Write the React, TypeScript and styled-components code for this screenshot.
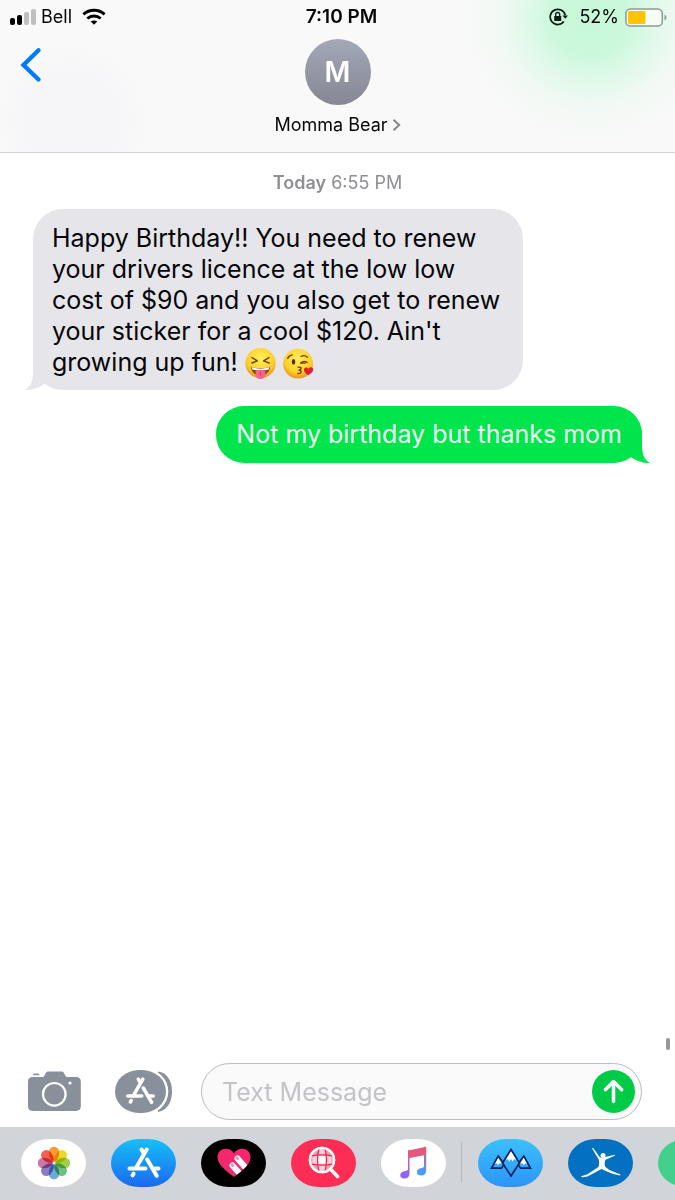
import React from "react";
import styled, { createGlobalStyle } from "styled-components";

const GlobalStyle = createGlobalStyle`
  *, *::before, *::after { box-sizing: border-box; }
  body {
    margin: 0;
    background: #fff;
    color: #060608;
    font-family: Inter, "Liberation Sans", sans-serif;
  }
  button, input { font: inherit; }
`;

const Screen = styled.div`
  display: flex;
  flex-direction: column;
  min-height: 100vh;
  overflow: hidden;
`;

const Header = styled.header`
  display: flex;
  flex-direction: column;
  border-bottom: 1px solid #d3d3d6;
  background:
    radial-gradient(ellipse 130px 125px at calc(100% - 84px) 18px, #c6f8d8 0%, rgba(200, 248, 218, 0.92) 30%, rgba(208, 249, 223, 0.6) 50%, rgba(225, 249, 233, 0.3) 72%, rgba(249, 249, 249, 0) 100%),
    radial-gradient(circle 76px at 72px 120px, #f6f6f9 0%, #f6f6f9 60%, rgba(249, 249, 249, 0) 100%),
    #f9f9f9;
`;

const StatusBar = styled.div`
  display: grid;
  grid-template-columns: 1fr auto 1fr;
  align-items: center;
  height: 34px;
  padding: 0 8px 0 10px;
  font-size: 18px;
  line-height: 24px;
`;

const StatusGroup = styled.div<{ $end?: boolean }>`
  display: flex;
  align-items: center;
  justify-content: ${(p) => (p.$end ? "flex-end" : "flex-start")};
  gap: ${(p) => (p.$end ? "6px" : "10px")};
`;

const Carrier = styled.span`
  display: flex;
  align-items: center;
  gap: 5px;
`;

const Charge = styled.span`
  margin-left: 4px;
`;

const Clock = styled.time`
  padding-left: 6px;
  font-size: 19px;
  font-weight: 600;
`;

const NavBar = styled.nav`
  display: grid;
  grid-template-columns: 1fr auto 1fr;
  align-items: start;
  height: 118px;
  padding: 5px 20px 0;
`;

const IconButton = styled.button`
  display: flex;
  flex: none;
  justify-self: start;
  padding: 0;
  border: 0;
  background: none;
  cursor: pointer;
`;

const BackButton = styled(IconButton)`
  padding-top: 8px;
`;

const Contact = styled.button`
  display: flex;
  flex-direction: column;
  align-items: center;
  gap: 8px;
  padding: 0;
  border: 0;
  background: none;
  color: inherit;
  font-size: 18px;
  line-height: 24px;
  cursor: pointer;
`;

const Avatar = styled.span`
  display: grid;
  place-items: center;
  width: 66px;
  height: 66px;
  border-radius: 50%;
  background: linear-gradient(#a3a8b8, #858892);
  color: #fff;
  font-size: 28px;
  font-weight: 600;
`;

const ContactName = styled.span`
  display: flex;
  align-items: center;
  gap: 4px;
`;

const Thread = styled.main`
  position: relative;
  display: flex;
  flex: 1;
  flex-direction: column;
  padding: 18px 33px 0;
`;

const Timestamp = styled.p`
  margin: 0 0 14px;
  color: #8e8e93;
  font-size: 18px;
  line-height: 24px;
  text-align: center;
`;

const Day = styled.strong`
  font-weight: 600;
`;

const Bubble = styled.p<{ $sent?: boolean }>`
  position: relative;
  align-self: ${(p) => (p.$sent ? "flex-end" : "flex-start")};
  max-width: 490px;
  margin: 0 0 16px;
  padding: ${(p) => (p.$sent ? "13px 20px" : "14px 19px 12px")};
  border-radius: ${(p) => (p.$sent ? "28px" : "30px")};
  background: ${(p) => (p.$sent ? "#00e54b" : "#e5e5ea")};
  color: ${(p) => (p.$sent ? "#f0fff4" : "#060608")};
  font-size: 25px;
  line-height: 31px;
`;

const Tail = styled.svg<{ $sent?: boolean }>`
  position: absolute;
  bottom: 0;
  ${(p) => (p.$sent ? "right: -9px; transform: scaleX(-1);" : "left: -9px;")}
  fill: ${(p) => (p.$sent ? "#00e54b" : "#e5e5ea")};
`;

const EmojiSvg = styled.svg`
  width: 31px;
  height: 31px;
  margin: -4px 7px -4px 0;
  vertical-align: -4px;
`;

const ScrollThumb = styled.div`
  position: absolute;
  right: 5px;
  bottom: 13px;
  width: 4px;
  height: 12px;
  border-radius: 2px;
  background: #98989c;
`;

const Composer = styled.form`
  display: flex;
  align-items: center;
  padding: 0 33px 7px 28px;
`;

const Tools = styled.div`
  display: flex;
  align-items: center;
  gap: 34px;
  margin-right: 29px;
`;

const Field = styled.div`
  display: flex;
  flex: 1;
  align-items: center;
  min-width: 0;
  height: 57px;
  padding: 0 6px 0 20px;
  border: 1px solid #bcbcc1;
  border-radius: 29px;
  background: #fafafa;
`;

const MessageInput = styled.input`
  flex: 1;
  min-width: 0;
  padding: 2px 0 0;
  border: 0;
  outline: 0;
  background: none;
  font-size: 25px;
  line-height: 31px;
  &::placeholder { color: #c3c3c8; opacity: 1; }
`;

const AppStrip = styled.div`
  display: flex;
  align-items: center;
  gap: 25px;
  height: 73px;
  padding: 0 0 2px 21px;
  overflow: hidden;
  background: #d1d4d9;
`;

const AppPill = styled.button<{ $fill: string }>`
  display: grid;
  flex: none;
  place-items: center;
  width: 65px;
  height: 48px;
  padding: 0;
  border: 0;
  border-radius: 28px / 24px;
  background: ${(p) => p.$fill};
  cursor: pointer;
`;

const Divider = styled.div`
  flex: none;
  width: 1px;
  height: 41px;
  margin: 0 -9px 0 -10px;
  background: #b4b7bc;
`;

const SignalIcon = () => (
  <svg width="26" height="18" viewBox="0 0 26 18" aria-label="Signal strength">
    <rect x="0" y="10" width="5" height="7" rx="2" fill="#000" />
    <rect x="7" y="7" width="5" height="10" rx="2" fill="#000" />
    <rect x="14" y="4" width="5" height="13" rx="2" fill="#bfbfc1" />
    <rect x="21" y="1" width="5" height="16" rx="2" fill="#bfbfc1" />
  </svg>
);

const WifiIcon = () => (
  <svg width="24" height="18" viewBox="0 0 24 18" fill="none" stroke="#000" strokeWidth="2.900" aria-label="Wi-Fi">
    <path d="M1.400 6.300C7.400.9 16.600.9 22.600 6.300" />
    <path d="M5.300 10.500C9.200 7.100 14.800 7.100 18.700 10.500" />
    <path d="M12 16.800 8.700 13.600C10.400 12.100 13.600 12.100 15.300 13.600Z" fill="#000" stroke="none" />
  </svg>
);

const RotationLockIcon = () => (
  <svg width="20" height="18" viewBox="0 0 20 18" fill="none" stroke="#0b1c12" aria-label="Rotation lock">
    <path d="M16.200 7.200A7.600 7.600 0 1 0 14.800 13.600" strokeWidth="1.700" />
    <path d="M13.400 7.500h5.600L16.300 10.800Z" fill="#0b1c12" stroke="none" />
    <rect x="5.200" y="8" width="7" height="5" rx=".6" fill="#0b1c12" stroke="none" />
    <path d="M6.700 8.400V6.500a2 2 0 0 1 4 0v1.900" strokeWidth="1.300" />
  </svg>
);

const BatteryIcon = () => (
  <svg width="42" height="19" viewBox="0 0 42 19" aria-label="Battery">
    <rect x=".9" y=".9" width="36.400" height="17.200" rx="4.600" fill="#f5fdf7" stroke="#8c9a92" strokeWidth="1.500" />
    <rect x="3" y="3" width="17.500" height="13" rx="1.600" fill="#fec400" />
    <path d="M39.500 6.500q2 .8 2 3t-2 3Z" fill="#8c9a92" />
  </svg>
);

const BackIcon = () => (
  <svg width="22" height="36" viewBox="0 0 22 36" fill="none" stroke="#007aff" strokeWidth="4.300" strokeLinecap="round" strokeLinejoin="miter">
    <path d="M18.500 3.200 3.500 18l15 14.500" />
  </svg>
);

const ChevronIcon = () => (
  <svg width="9" height="14" viewBox="0 0 9 14" fill="none" stroke="#85858b" strokeWidth="2">
    <path d="m1.500 1.800 5.700 5.200-5.700 5.200" />
  </svg>
);

const BubbleTail = ({ sent }: { sent?: boolean }) => (
  <Tail $sent={sent} width="24" height="32" viewBox="0 0 24 32" aria-hidden>
    <path d="M9 0V13C9 22 7.500 28.500 1 32c7 .3 13-1.800 18.500-5.500L24 20V0Z" />
  </Tail>
);

const TongueFace = () => (
  <EmojiSvg viewBox="0 0 30 30" role="img" aria-label="Squinting face with tongue">
    <defs>
      <radialGradient id="faceA" cx=".5" cy=".35" r=".68">
        <stop offset="0" stopColor="#fff05a" />
        <stop offset=".65" stopColor="#fdd02c" />
        <stop offset="1" stopColor="#e98a16" />
      </radialGradient>
    </defs>
    <circle cx="15" cy="14.700" r="14.600" fill="url(#faceA)" />
    <path d="m6.800 9.300 5.200 3.200-5.300 2M23.200 9.300l-5.200 3.200 5.300 2" fill="none" stroke="#6e3f0c" strokeWidth="1.400" strokeLinecap="round" strokeLinejoin="round" />
    <path d="M5.500 17.800q9.500 3.800 19 0c-.7 5.600-4.600 8.800-9.500 8.800s-8.800-3.200-9.500-8.800Z" fill="#8a4a10" />
    <path d="M6.300 18.500q8.700 3 17.400 0l-.8 2.200q-7.900 2-15.800 0Z" fill="#fff" />
    <path d="M10.300 22.200q4.700-2 9.400 0v3.400a4.700 4.400 0 0 1-9.400 0Z" fill="#fb5f8e" />
    <path d="M15 22.500v4" stroke="#d93b6c" strokeWidth="1" />
  </EmojiSvg>
);

const KissFace = () => (
  <EmojiSvg viewBox="0 0 30 30" role="img" aria-label="Face blowing a kiss">
    <defs>
      <radialGradient id="faceB" cx=".5" cy=".35" r=".68">
        <stop offset="0" stopColor="#fff05a" />
        <stop offset=".65" stopColor="#fdd02c" />
        <stop offset="1" stopColor="#e98a16" />
      </radialGradient>
    </defs>
    <circle cx="14.600" cy="15.200" r="14.400" fill="url(#faceB)" />
    <g fill="none" stroke="#6b3b0a" strokeWidth="1.300" strokeLinecap="round" strokeLinejoin="round">
      <path d="M4.500 10q1.500-3 4.500-3.400M17.500 8.200q3.500-1.900 6 .8" />
      <path d="M17 14.500q3-2.800 6.500-.5M17.500 14.700h4" />
      <path d="M14.500 18.500q3.500-.2 3 1.500-.3 1.100-2 1.300 2.300.3 2 2-.4 1.500-3 1.400" />
    </g>
    <ellipse cx="10.200" cy="13.400" rx="1.700" ry="2.700" fill="#55300b" />
    <path d="M24.500 26.400c-4-2.500-4.900-4.900-3.700-6.700 1-1.400 3-1 3.700.6.8-1.700 3-2.300 4.200-.9 1.500 2-.6 4.800-4.200 7Z" fill="#e3202e" />
  </EmojiSvg>
);

const CameraIcon = () => (
  <svg width="53" height="41" viewBox="0 0 53 41" fill="#87909b">
    <path d="M5 4.200C5 2.600 6 2.400 7 2.400h2.800c1.200 0 1.700.8 1.700 1.800Z" />
    <path d="M4.500 6.100h9.300c1.600 0 2.300-.5 3-2l.7-1.700C18.200 1 19 .6 20.600.6h12.600c1.600 0 2.400.4 3 1.800l.8 1.700c.7 1.500 1.400 2 3 2h8.200c3 0 4.600 1.600 4.600 4.600v24.600c0 3-1.600 4.600-4.600 4.600H4.500C1.600 39.900 0 38.300 0 35.300V10.700C0 7.700 1.600 6.100 4.500 6.100Z" />
    <circle cx="26.300" cy="23.300" r="11.300" fill="none" stroke="#fff" strokeWidth="2.200" />
    <circle cx="42" cy="12" r="1.600" fill="#fff" />
  </svg>
);

const StoreGlyph = () => (
  <g fill="none" stroke="#fff" strokeWidth="4" strokeLinecap="round">
    <path d="M19.700 2.500 9.400 20.300M14.500 2.500l2.300 4M20.200 12.500l9.500 16.300" />
    <path d="M2.500 21.500h16M27.500 21.500h4M6.500 26.700l-1 1.700" />
  </g>
);

const AppStoreIcon = () => (
  <svg width="34" height="31" viewBox="0 0 34 31">
    <StoreGlyph />
  </svg>
);

const AppsDrawerIcon = () => (
  <svg width="57" height="43" viewBox="0 0 57 43">
    <path d="M43 1.500C52 2.500 57 11 57 21.500S52 40.500 43 42Z" fill="#87909b" />
    <rect x="-1.700" y="-1.700" width="55" height="46.400" rx="25" ry="23.200" fill="#fff" />
    <rect x="0" y="0" width="51" height="43" rx="24" ry="21.500" fill="#87909b" />
    <g transform="translate(10.500 7) scale(.88)">
      <StoreGlyph />
    </g>
  </svg>
);

const SendIcon = () => (
  <svg width="43" height="43" viewBox="0 0 43 43" fill="none">
    <circle cx="21.500" cy="21.500" r="21.500" fill="#00cb46" />
    <path d="M21.500 31.500v-20M13.300 19.700l8.200-8.200 8.200 8.200" stroke="#fff" strokeWidth="3.500" strokeLinecap="round" strokeLinejoin="round" />
  </svg>
);

const petals = ["#f98f1e", "#e8d60f", "#96c93a", "#5fb96f", "#5f9fd6", "#8170b8", "#c5699f", "#ee4f40"];

const PetalBlend = styled.path`
  mix-blend-mode: multiply;
`;

const PhotosIcon = () => (
  <svg width="36" height="36" viewBox="-18 -18 36 36">
    {petals.map((color, i) => (
      <PetalBlend
        key={color}
        d="M0-1C-3.500-2.500-5.200-6-5.200-11a5.200 5.200 0 0 1 10.400 0C5.200-6 3.500-2.500 0-1Z"
        fill={color}
        fillOpacity=".9"
        transform={`rotate(${i * 45})`}
      />
    ))}
  </svg>
);

const HeartIcon = () => (
  <svg width="34" height="30" viewBox="0 0 34 30">
    <defs>
      <clipPath id="heart">
        <path d="M17 29C11 24 .5 17.500.5 9.300.5 4 4.300.8 8.800.8c3.600 0 6.700 1.900 8.200 4.700C18.500 2.700 21.600.8 25.200.8c4.500 0 8.300 3.200 8.300 8.500C33.500 17.500 23 24 17 29Z" />
      </clipPath>
    </defs>
    <g clipPath="url(#heart)">
      <rect width="34" height="30" fill="#f7276f" />
      <path d="m20.500 10.500 12 13.500M15.500 17.500 27 30.500" stroke="#fff" strokeWidth="6" strokeLinecap="round" />
      <path d="m19.800 9.700.9 1M14.800 16.700l.9 1" stroke="#f88db0" strokeWidth="2.600" strokeLinecap="round" />
    </g>
  </svg>
);

const SearchGlobeIcon = () => (
  <svg width="32" height="33" viewBox="0 0 32 33" fill="none" stroke="#fff" strokeLinecap="round">
    <circle cx="14" cy="14" r="12" fill="#ff9bac" strokeWidth="2.300" />
    <path d="M10.500 3h7v6h6v10h-6v6h-7v-6h-6V9h6Z" fill="#ffd0d8" stroke="none" />
    <path d="M10.500 10h7v7.500h-7Z" fill="#fff" stroke="none" />
    <path d="M11 3Q8 14 11 25M17 3q3 11 0 22M3 10.200q11-2.600 22 0M3 17.800q11 2.600 22 0" stroke="#ef2451" strokeWidth="1.200" />
    <circle cx="14" cy="14" r="12.200" strokeWidth="2.200" />
    <path d="m23 23.500 6.500 7" strokeWidth="3.600" />
  </svg>
);

const MusicIcon = () => (
  <svg width="28" height="34" viewBox="0 0 28 34">
    <defs>
      <linearGradient id="musicLeft" x1="0" y1="0" x2="0" y2="34" gradientUnits="userSpaceOnUse">
        <stop offset=".1" stopColor="#fb5267" />
        <stop offset=".45" stopColor="#c559bd" />
        <stop offset=".9" stopColor="#8b62fa" />
      </linearGradient>
      <linearGradient id="musicRight" x1="0" y1="0" x2="0" y2="34" gradientUnits="userSpaceOnUse">
        <stop offset=".1" stopColor="#f8566d" />
        <stop offset=".45" stopColor="#8c75da" />
        <stop offset=".8" stopColor="#42a2fa" />
      </linearGradient>
    </defs>
    <path d="M8.500 4.500 25 1v8L8.500 12.300Z" fill="#e4587f" />
    <path d="M8 5.500c0-1.400.4-1.900 1.500-2.100v23.800c0 3.600-1.800 5.300-5.100 5.300-2.400 0-4.100-1.200-4.100-3.300 0-2.300 1.700-3.700 5-4.200 2-.3 2.700-.8 2.700-2Z" fill="url(#musicLeft)" />
    <path d="M24 .8c1.400-.3 2.200 0 2.200 1.300v22.200c0 3.500-1.900 5.200-5 5.200-2.500 0-4.300-1.200-4.300-3.300 0-2.300 1.700-3.600 4.700-4.100 1.900-.3 2.400-.8 2.400-2Z" fill="url(#musicRight)" />
  </svg>
);

const PeaksIcon = () => (
  <svg width="42" height="30" viewBox="0 0 42 30" fill="none">
    <path d="m21 2-5.800 10.500 2.500-1.500 1.600 2.500 1.700-2.500 1.700 2.500 1.600-2.500 2.500 1.500ZM8 9l-3.800 7 2-.7L8 17l1.500-1.700 2.200.7ZM34 9l-3.800 7 2-.7L34 17l1.500-1.700 2.200.7Z" fill="#fff" />
    <g stroke="#09245e" strokeWidth="1.700">
      <path d="m21 1.500 8.500 13.500L21 28 12.500 15Z" />
      <path d="M13 14.500 8.200 8 1.500 20.200h9.800l3-4M29 14.500 33.800 8l6.700 12.200h-9.800l-3-4" />
    </g>
  </svg>
);

const LeaperIcon = () => (
  <svg width="42" height="32" viewBox="0 0 42 32" fill="#fff">
    <circle cx="23" cy="8.500" r="2.500" />
    <path d="M12 1.200 13 .8l6.800 9.500q3 1.700 5.500-.2l9.500-2.400.3.900-9.600 4.200c-.8 2.400-1.300 4.500-.2 6.900l4 3.200 11.200 4.600-.4.900c-4.600-.8-8.500-1.900-12.600-3.600L21.600 22c-3.800 1.700-8 4.500-12.700 6.800-2.800 1.400-5.500 1.600-7.900 1.300l.2-.9 6.300-1.900 10.900-7.200c.8-2.500 1.100-4.600.3-7.700Z" />
  </svg>
);

const apps = [
  { name: "Photos", fill: "#fff", icon: <PhotosIcon /> },
  { name: "App Store", fill: "linear-gradient(#16c0f7, #1b68f0)", icon: <AppStoreIcon /> },
  { name: "Digital Touch", fill: "#000", icon: <HeartIcon /> },
  { name: "Images", fill: "#fd2d55", icon: <SearchGlobeIcon /> },
  { name: "Music", fill: "#fff", icon: <MusicIcon /> },
];

const moreApps = [
  { name: "Peaks", fill: "linear-gradient(#3cc0fd, #2b95f6)", icon: <PeaksIcon /> },
  { name: "Fitness", fill: "#0470c2", icon: <LeaperIcon /> },
  { name: "More", fill: "#43cf8c", icon: null },
];

export default function App() {
  return (
    <Screen>
      <GlobalStyle />
      <Header>
        <StatusBar>
          <StatusGroup>
            <Carrier>
              <SignalIcon />
              Bell
            </Carrier>
            <WifiIcon />
          </StatusGroup>
          <Clock>7:10 PM</Clock>
          <StatusGroup $end>
            <RotationLockIcon />
            <Charge>52%</Charge>
            <BatteryIcon />
          </StatusGroup>
        </StatusBar>
        <NavBar>
          <BackButton type="button" aria-label="Back">
            <BackIcon />
          </BackButton>
          <Contact type="button">
            <Avatar>M</Avatar>
            <ContactName>
              Momma Bear
              <ChevronIcon />
            </ContactName>
          </Contact>
        </NavBar>
      </Header>
      <Thread>
        <Timestamp>
          <Day>Today</Day> 6:55 PM
        </Timestamp>
        <Bubble>
          <BubbleTail />
          Happy Birthday!! You need to renew your drivers licence at the low low cost of $90 and you also get
          to renew your sticker for a cool $120. Ain't growing up fun! <TongueFace />
          <KissFace />
        </Bubble>
        <Bubble $sent>
          <BubbleTail sent />
          Not my birthday but thanks mom
        </Bubble>
        <ScrollThumb />
      </Thread>
      <Composer onSubmit={(e) => e.preventDefault()}>
        <Tools>
          <IconButton type="button" aria-label="Camera">
            <CameraIcon />
          </IconButton>
          <IconButton type="button" aria-label="Apps">
            <AppsDrawerIcon />
          </IconButton>
        </Tools>
        <Field>
          <MessageInput type="text" placeholder="Text Message" aria-label="Text Message" />
          <IconButton type="submit" aria-label="Send">
            <SendIcon />
          </IconButton>
        </Field>
      </Composer>
      <AppStrip>
        {apps.map((app) => (
          <AppPill key={app.name} type="button" aria-label={app.name} $fill={app.fill}>
            {app.icon}
          </AppPill>
        ))}
        <Divider />
        {moreApps.map((app) => (
          <AppPill key={app.name} type="button" aria-label={app.name} $fill={app.fill}>
            {app.icon}
          </AppPill>
        ))}
      </AppStrip>
    </Screen>
  );
}
